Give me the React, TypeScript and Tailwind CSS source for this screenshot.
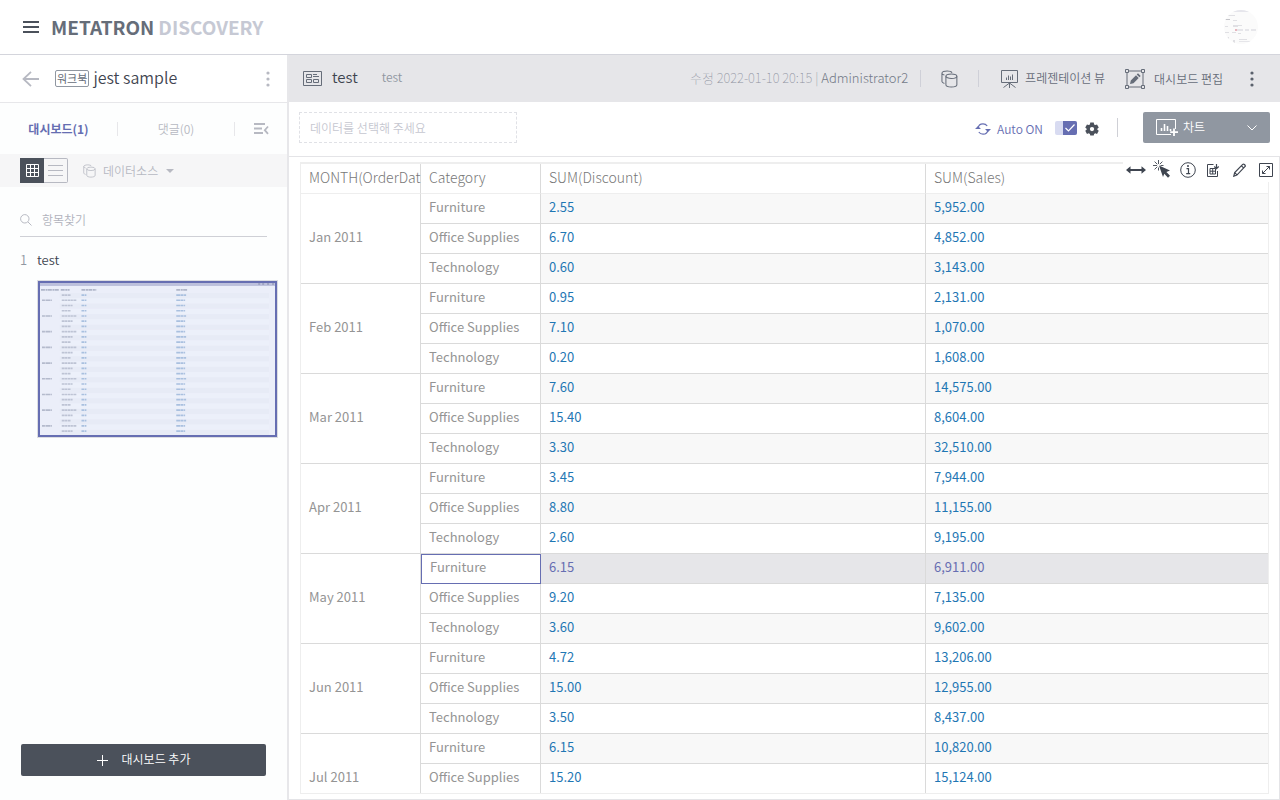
import React from 'react';

const months = ['Jan', 'Feb', 'Mar', 'Apr', 'May', 'Jun', 'Jul'];
const categories = ['Furniture', 'Office Supplies', 'Technology'];
const values: [string, string][] = [
  ['2.55', '5,952.00'], ['6.70', '4,852.00'], ['0.60', '3,143.00'],
  ['0.95', '2,131.00'], ['7.10', '1,070.00'], ['0.20', '1,608.00'],
  ['7.60', '14,575.00'], ['15.40', '8,604.00'], ['3.30', '32,510.00'],
  ['3.45', '7,944.00'], ['8.80', '11,155.00'], ['2.60', '9,195.00'],
  ['6.15', '6,911.00'], ['9.20', '7,135.00'], ['3.60', '9,602.00'],
  ['4.72', '13,206.00'], ['15.00', '12,955.00'], ['3.50', '8,437.00'],
  ['6.15', '10,820.00'], ['15.20', '15,124.00'],
];
const selectedRow = 12;

function Dots({ className }: { className: string }) {
  return (
    <svg width="4" height="16" viewBox="0 0 4 16" className={className} fill="currentColor">
      <circle cx="2" cy="2" r="1.6" /><circle cx="2" cy="8" r="1.6" /><circle cx="2" cy="14" r="1.6" />
    </svg>
  );
}

function Databases({ className }: { className: string }) {
  return (
    <svg viewBox="0 0 18 19" className={className} fill="none" stroke="currentColor" strokeWidth="1.1">
      <path d="M3.6 14.2C2 13.7 1 13 1 12.2V3.3M11.7 2.8C11 1.6 9 1 6.5 1 3.5 1 1 2 1 3.3 1 4.3 2 4.9 3.6 5.3" />
      <ellipse cx="11" cy="6.5" rx="5.8" ry="2.4" />
      <path d="M5.2 6.5V15.6C5.2 17 7.8 18 11 18S16.800 17 16.8 15.6V6.5" />
    </svg>
  );
}

function Header() {
  return (
    <header className="flex h-[55px] shrink-0 items-center border-b border-[#d4d5dc] bg-white pr-[21px] pl-[23px]">
      <button aria-label="Menu" className="text-[#4b515b]">
        <svg width="16" height="12" viewBox="0 0 16 12" fill="currentColor">
          <path d="M0 0h16v2H0zM0 5h16v2H0zM0 10h16v2H0z" />
        </svg>
      </button>
      <a href="#" className="ml-3 flex text-[19px] leading-6 font-bold text-[#666d79]">
        METATRON<span className="ml-1 text-[#c6c9d4]">DISCOVERY</span>
      </a>
      <button aria-label="Profile" className="ml-auto overflow-hidden rounded-full">
        <svg width="36" height="36" viewBox="0 0 36 36">
          <defs><clipPath id="avatar"><circle cx="18" cy="18" r="17" /></clipPath></defs>
          <g clipPath="url(#avatar)">
            <rect width="36" height="36" fill="#fbfbfb" />
            <path d="M0 1h36v2H0z" fill="#e6e6ec" />
            <path d="M4 6h8v1H4zM2 17h3v1H2zM2 23h4v1H2zM4 28h2v2H4zM10 11h4v1h-4zM10 16h9v1h-9zM10 17h5v1h-5zM9 23h4v1H9zM15 24h3v1h-3zM10 31h2v3h-2zM16 30h8v1h-8z" fill="#e0e0e4" />
            <path d="M2 10h5v1H2z" fill="#c4c4c9" />
            <path d="M14 20h6v2h-6zM22 20h4v2h-4zM28 20h5v2h-5zM16 32h12v1H16z" fill="#e6e6ea" />
            <path d="M12 20h2v2h-2z" fill="#e8b4bd" />
          </g>
        </svg>
      </button>
    </header>
  );
}

function Thumbnail() {
  const rows = Array.from({ length: 27 }, (_, i) => i);
  return (
    <button aria-label="test" className="block w-full border border-[#dcdde2]">
      <svg viewBox="0 0 238 154" className="block w-full border-2 border-[#666eb2] bg-[#ebeef9]" preserveAspectRatio="none">
        <defs><filter id="soft"><feGaussianBlur stdDeviation="0.7 0.4" /></filter></defs>
        <rect width="238" height="3" fill="#bcc0dc" />
        <path d="M221 1h2M225 1h2M230 1h2M235 1h2" stroke="#8388a8" />
        {rows.map((i) => (
          <rect key={i} x="20" y={10.2 + i * 5.33} width="212" height="5.33" fill={i % 2 ? '#ecf0fa' : '#e7ebf6'} />
        ))}
        <g filter="url(#soft)">
          <path d="M1 7h18M21 7h9M42 7h15M138 7h11" stroke="#b0b6c9" strokeWidth="1.600" strokeDasharray="4 .6 2 .4" />
          {rows.map((i) => {
            const y = 12.2 + i * 5.3;
            return (
              <g key={i} strokeWidth="1.700">
                {i % 3 === 1 && <path d={`M2 ${y}h10`} stroke="#b4bacc" strokeDasharray="3 .5 5 .4" />}
                <path d={`M22 ${y}h${[9, 15, 11][i % 3]}`} stroke="#bdc3d4" strokeDasharray="3 .4 2 .5" />
                <path d={`M42 ${y}h5`} stroke="#a9c0df" strokeDasharray="3 .5" />
                <path d={`M138 ${y}h${9 + (i % 4 === 0 ? 1 : 0)}`} stroke="#a9c0df" strokeDasharray="4 .4 3 .5" />
              </g>
            );
          })}
        </g>
      </svg>
    </button>
  );
}

function Sidebar() {
  return (
    <aside className="flex w-[289px] shrink-0 flex-col border-r-2 border-[#e7e7ea] bg-[#fdfefe]">
      <div className="flex h-12 shrink-0 items-center border-b border-[#e7e7ea] bg-white pr-[17px] pl-[22px]">
        <button aria-label="Back" className="text-[#b7b9c2]">
          <svg width="17" height="16" viewBox="0 0 17 16" fill="none" stroke="currentColor" strokeWidth="1.800">
            <path d="M17 8H1.500M9 .8 1.500 8 9 15.200" />
          </svg>
        </button>
        <span className="ml-4 flex h-[17px] items-center rounded-[2px] border border-[#9097a1] px-px text-[11px] leading-4 font-normal text-[#666d79]"><span className="pb-[2px]">워크북</span></span>
        <h1 className="ml-1 pb-1 text-[16px] leading-5 text-[#3f4550]">jest sample</h1>
        <button aria-label="More" className="ml-auto"><Dots className="text-[#b7b9c2]" /></button>
      </div>
      <nav className="flex h-[51px] shrink-0 items-center text-[12px]">
        <button className="w-[117px] font-bold text-[#666eb2]">대시보드(1)</button>
        <span className="h-[14px] w-px bg-[#e7e7ea]" />
        <button className="w-[116px] text-[#b7b9c2]">댓글(0)</button>
        <span className="h-[14px] w-px bg-[#e7e7ea]" />
        <button aria-label="Collapse" className="ml-[19px] text-[#b7b9c2]">
          <svg width="15" height="12" viewBox="0 0 15 12" fill="none" stroke="currentColor" strokeWidth="1.800">
            <path d="M0 1h11M0 5.500h8M0 10h9M14 3.500 10.800 7.200l3.200 3.700" />
          </svg>
        </button>
      </nav>
      <div className="flex h-[33px] shrink-0 items-center bg-[#f6f6f7] pl-5">
        <button aria-label="Grid view" className="flex h-[25px] w-6 items-center justify-center bg-[#4b515b] text-white">
          <svg width="13" height="13" viewBox="0 0 13 13" fill="none" stroke="currentColor"><path d="M.5.500h12v12H.5zM4.500 0v13M8.500 0v13M0 4.500h13M0 8.500h13" /></svg>
        </button>
        <button aria-label="List view" className="flex h-[25px] w-6 items-center justify-center rounded-r-[2px] border border-l-0 border-[#b7b9c2] text-[#b7b9c2]">
          <svg width="15" height="11" viewBox="0 0 15 11" stroke="currentColor"><path d="M0 .5h15M0 5.500h15M0 10.500h15" /></svg>
        </button>
        <button className="ml-[15px] flex items-center text-[12px] text-[#b7b9c2]">
          <Databases className="h-[14px] w-[13px]" />
          <span className="ml-[7px]">데이터소스</span>
          <svg width="8" height="4" viewBox="0 0 8 4" className="ml-2" fill="currentColor"><path d="M0 0h8L4 4z" /></svg>
        </button>
      </div>
      <label className="mx-5 mt-[17px] flex h-[33px] shrink-0 items-center border-b border-[#cfd0d6]">
        <svg width="12" height="12" viewBox="0 0 12 12" fill="none" stroke="#b7b9c2"><circle cx="4.800" cy="4.800" r="4.200" /><path d="m8 8 3.500 3.500" /></svg>
        <input aria-label="항목찾기" placeholder="항목찾기" className="ml-[10px] min-w-0 flex-1 text-[12px] outline-none placeholder:text-[#b0b2bc]" />
      </label>
      <div className="mt-[11px] flex shrink-0 pl-5 text-[13px] leading-6">
        <span className="w-[17px] text-[#9097a1]">1</span>
        <span className="text-[#3f4550]">test</span>
      </div>
      <div className="mt-2 pr-[9px] pl-[37px]"><Thumbnail /></div>
      <button className="mx-[21px] mt-auto mb-6 flex h-8 shrink-0 items-center justify-center gap-[14px] rounded-[2px] bg-[#4b515b] text-[12px] text-white">
        <svg width="11" height="11" viewBox="0 0 11 11" stroke="currentColor"><path d="M5.500 0v11M0 5.500h11" /></svg>
        <span className="pb-[2px]">대시보드 추가</span>
      </button>
    </aside>
  );
}

function DashboardBar() {
  return (
    <div className="flex h-[47px] shrink-0 items-center bg-[#e6e6e9] pr-[26px] pl-[14px] text-[12px] text-[#666d79]">
      <svg width="19" height="15" viewBox="0 0 19 15" fill="none" stroke="currentColor"><path d="M.5.500h18v14H.5zM3.500 3.500h5v3h-5zM3.500 8.500h5v3h-5zM10.500 8.500h5v3h-5zM10 3.500h4M10 5.500h6" /></svg>
      <h2 className="ml-[10px] pb-1 text-[15px] leading-5 text-[#3f4550]">test</h2>
      <span className="ml-6 pb-1 leading-5 text-[#9097a1]">test</span>
      <p className="ml-auto pb-[2px] text-[13px] leading-5 font-thin text-[#8d919e]">수정 2022-01-10 20:15 | <span className="font-light text-[#737a87]">Administrator2</span></p>
      <span className="ml-3 h-[17px] w-px bg-[#cfd0d8]" />
      <button aria-label="Data sources" className="mx-5"><Databases className="h-[18px] w-[17px]" /></button>
      <span className="h-[17px] w-px bg-[#cfd0d8]" />
      <button className="ml-[22px] flex items-center gap-[7px]">
        <svg width="17" height="18" viewBox="0 0 17 18" fill="none" stroke="currentColor"><path d="M.5.500h16v12H.5zM5.500 7.500V10M7.500 5.500V10M9.500 6.500V10M11.500 4.500V10M8.500 12.500V18M8.500 13l-6 4.500M8.500 13l6 4.500" /></svg>
        <span className="pb-[2px]">프레젠테이션 뷰</span>
      </button>
      <button className="ml-5 flex items-center gap-[9px]">
        <svg width="20" height="20" viewBox="0 0 20 20" fill="none" stroke="currentColor">
          <path d="M3.500 2h13M3.500 18h13M2 3.500v13M18 3.500v13M.5.500h3v3h-3zM16.500.500h3v3h-3zM.5 16.500h3v3h-3zM16.500 16.500h3v3h-3z" />
          <path d="m5 15 .8-3.500 5.200-5.200 2.700 2.700-5.200 5.200zM11.700 5.600 13 4.300 15.700 7l-1.300 1.300z" fill="currentColor" stroke="none" />
        </svg>
        대시보드 편집
      </button>
      <button aria-label="More" className="ml-[27px]"><Dots className="text-[#5a616c]" /></button>
    </div>
  );
}

function FilterBar() {
  return (
    <div className="flex h-[54px] shrink-0 items-center bg-white px-[10px] pb-[3px] text-[12px]">
      <div className="flex h-[31px] w-[218px] items-center border border-dashed border-[#e0e1e6] px-[10px] text-[#c6c7d0]">데이터를 선택해 주세요</div>
      <button className="ml-auto flex items-center gap-[6px] pt-[3px] text-[#666eb2]">
        <svg width="16" height="12" viewBox="0 0 16 12" fill="none" stroke="currentColor" strokeWidth="1.200">
          <path d="M3 5.500C3.300 2.500 5.400.8 8 .8c1.900 0 3.300.8 4.200 2.200M13 6.500c-.3 3-2.400 4.700-5 4.700-1.900 0-3.300-.8-4.200-2.200" />
          <path d="M0 6h6L3 3zM10 6h6l-3 3z" fill="currentColor" stroke="none" />
        </svg>
        Auto ON
      </button>
      <label className="ml-3 flex h-[14px] w-[22px] cursor-pointer justify-end overflow-hidden rounded-[2px] bg-[#d8dbf1]">
        <input type="checkbox" aria-label="Auto" defaultChecked className="sr-only" />
        <span className="flex w-[14px] items-center justify-center bg-[#666eb2]">
          <svg width="10" height="8" viewBox="0 0 10 8" fill="none" stroke="#fff" strokeWidth="1.200"><path d="M.5 4 3.500 7l6-6.500" /></svg>
        </span>
      </label>
      <button aria-label="Settings" className="ml-2 pt-[3px] text-[#4b515b]">
        <svg width="14" height="14" viewBox="0 0 24 24" fill="currentColor" fillRule="evenodd"><path d="M9 1h6l.6 3.100 2 1.200 3-1.100 3 5.200-2.400 2v1.800l2.400 2-3 5.200-3-1.100-2 1.200L15 23H9l-.6-2.500-2-1.200-3 1.100-3-5.200 2.400-2v-1.800l-2.400-2 3-5.200 3 1.100 2-1.200zm3 7.500a3.700 3.700 0 1 0 0 7.400 3.700 3.700 0 0 0 0-7.400z" /></svg>
      </button>
      <span className="ml-[18px] h-[19px] w-px bg-[#cfd0d6]" />
      <button className="ml-[25px] flex h-[31px] w-[127px] items-center rounded-[2px] bg-[#9097a1] pr-[13px] pl-[13px] text-white">
        <svg width="23" height="18" viewBox="0 0 23 18" fill="none" stroke="currentColor">
          <path d="M15 15.500H.5V.500h19V10" /><path d="M5.500 9v3M8.500 5v7M11.500 7v5M14.500 10v2" strokeWidth="1.600" /><path d="M18 9.500V17M14.200 13.200H22" strokeWidth="1.800" />
        </svg>
        <span className="ml-1 pb-[2px]">차트</span>
        <svg width="10" height="6" viewBox="0 0 10 6" className="ml-auto" fill="none" stroke="currentColor"><path d="m.5.500 4.500 4.500L9.500.5" /></svg>
      </button>
    </div>
  );
}

function WidgetTools() {
  return (
    <div className="absolute top-px right-0 flex h-6 items-center bg-white pr-[6px] pl-[3px] text-[#3f4550]">
      <button aria-label="Fit width">
        <svg width="20" height="10" viewBox="0 0 20 10" fill="currentColor"><path d="M0 5l4.500-3.800V4h11V1.200L20 5l-4.500 3.800V6h-11v2.800z" /></svg>
      </button>
      <button aria-label="Select" className="ml-[7px] pb-[2px]">
        <svg width="18" height="18" viewBox="0 0 18 18" fill="currentColor"><path d="m6 5.500 11 5-3.600 1.400 3.600 3.900-2 1.900-3.700-3.900L10 17z" /><path d="M5.500 0v4M5.500 7.500v3M0 5.500h4M1.600 1.600l2.700 2.700M9.400 1.600 6.800 4.200M1.600 9.400l2.700-2.700M7.500 5.500H10.500" stroke="currentColor" strokeWidth=".9" /></svg>
      </button>
      <button aria-label="Info" className="ml-[9px]">
        <svg width="16" height="16" viewBox="0 0 16 16" fill="none" stroke="currentColor"><circle cx="8" cy="8" r="7.300" /><path d="M6.500 6.700h2V12M6.200 11.700h4" strokeWidth="1.200" /><circle cx="8" cy="4" r=".6" fill="currentColor" /></svg>
      </button>
      <button aria-label="Download data" className="ml-[11px]">
        <svg width="13" height="14" viewBox="0 0 13 14" fill="none" stroke="currentColor"><path d="M6.500 1.500H.5v12h10V8M3 5.500h5.500v5.500H3zM3 8.200h5.500M5.700 5.500V11" /><path d="M9.500 1v4.500M7.300 3.500 9.500 5.700 11.700 3.500" strokeWidth="1.200" /></svg>
      </button>
      <button aria-label="Edit" className="ml-[13px]">
        <svg width="13" height="14" viewBox="0 0 13 14" fill="none" stroke="currentColor" strokeWidth="1.200"><path d="m.8 13.200.9-3.600 8-8.200q.8-.7 1.700.1l.5.500q.8.900 0 1.700l-8 8.400zM8.300 2.700l2.500 2.500M1.700 9.600l2.300 2.300" /></svg>
      </button>
      <button aria-label="Expand" className="ml-[13px]">
        <svg width="14" height="14" viewBox="0 0 14 14" fill="none" stroke="currentColor"><path d="M.5.500h13v13H.5zM3.500 10.500l7-7M7.500 3.500h3v3M3.500 7.500v3h3" /></svg>
      </button>
    </div>
  );
}

function Grid() {
  return (
    <div className="min-h-0 flex-1 overflow-hidden border-x border-t-2 border-b border-[#eeeeee]">
      <table className="w-full table-fixed border-separate border-spacing-0 text-left text-[13px] leading-5 font-normal text-[#949494]">
        <colgroup><col className="w-[120px]" /><col className="w-[120px]" /><col className="w-[385px]" /><col /></colgroup>
        <thead>
          <tr className="h-[30px]">
            {['MONTH(OrderDat', 'Category', 'SUM(Discount)', 'SUM(Sales)'].map((name, i) => (
              <th key={name} className={`border-b border-[#eeeeee] px-0 pb-[3px] pl-2 text-[14px] font-light whitespace-nowrap text-[#777777] ${i < 3 ? 'border-r border-r-[#dadada]' : ''}`}>{name}</th>
            ))}
          </tr>
        </thead>
        <tbody>
          {values.map(([discount, sales], i) => {
            const selected = i === selectedRow;
            const tone = selected ? 'bg-[#e6e6e9] text-[#666eb2]' : i % 2 === 0 ? 'bg-[#f8f8f8] text-[#1f77b4]' : 'bg-white text-[#1f77b4]';
            return (
              <tr key={i} className="h-[30px]">
                {i % 3 === 0 && (
                  <th rowSpan={Math.min(3, values.length - i)} className="border-r border-b border-[#dadada] pb-1 pl-2 font-normal">
                    <span className={i === 18 ? 'block pt-[30px]' : ''}>{months[i / 3]} 2011</span>
                  </th>
                )}
                <th className={`pb-1 pl-2 font-normal ${selected ? 'border border-[#666eb2]' : 'border-r border-b border-[#dadada]'}`}>{categories[i % 3]}</th>
                <td className={`border-r border-b border-[#dadada] pb-1 pl-2 ${tone}`}>{discount}</td>
                <td className={`border-b border-[#dadada] pb-1 pl-2 ${tone}`}>{sales}</td>
              </tr>
            );
          })}
        </tbody>
      </table>
    </div>
  );
}

export default function App() {
  return (
    <div className="flex h-screen flex-col overflow-hidden bg-white font-['Noto_Sans_CJK_KR',sans-serif] font-[350]">
      <Header />
      <div className="flex min-h-0 flex-1">
        <Sidebar />
        <main className="flex min-w-0 flex-1 flex-col">
          <DashboardBar />
          <FilterBar />
          <section className="relative flex min-h-0 flex-1 flex-col border border-l-0 border-[#e4e4e7] pt-[5px] pr-[10px] pb-[5px] pl-[11px]">
            <Grid />
            <WidgetTools />
          </section>
        </main>
      </div>
    </div>
  );
}
